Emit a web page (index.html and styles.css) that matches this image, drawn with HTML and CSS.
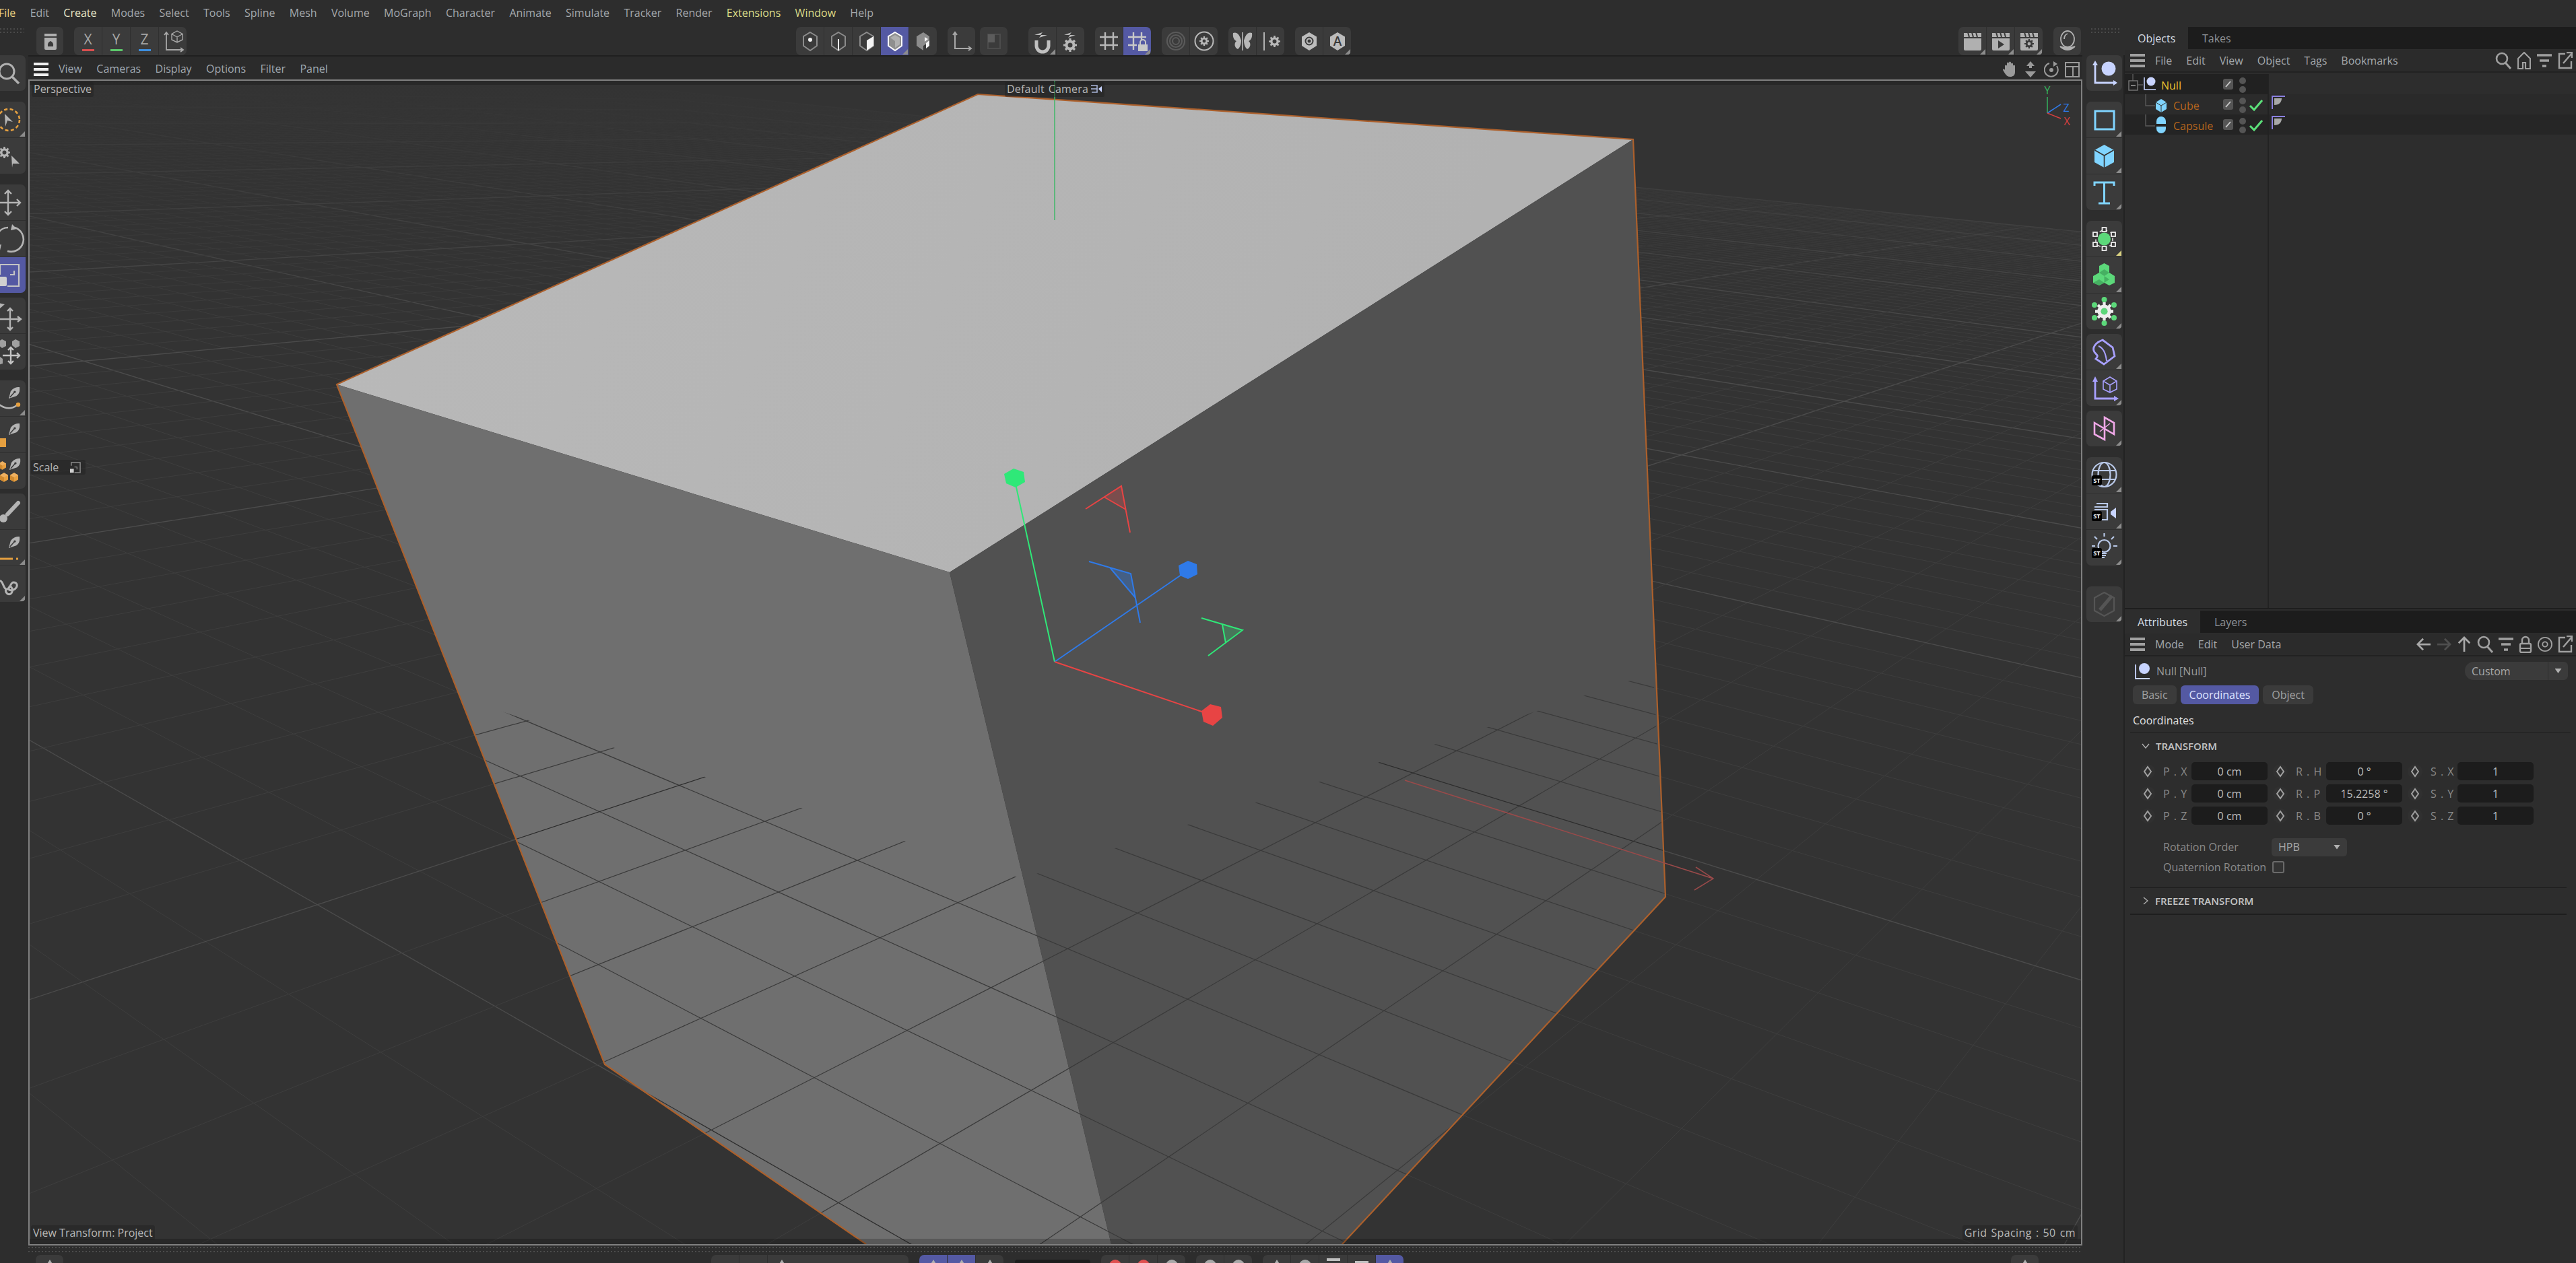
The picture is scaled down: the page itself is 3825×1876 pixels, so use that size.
FILE: index.html
```html
<!DOCTYPE html>
<html lang="en">
<head>
<meta charset="utf-8">
<title>Cinema 4D</title>
<link rel="stylesheet" href="styles.css">
</head>
<body>
<svg class="defs" aria-hidden="true">
  <defs>
    <symbol id="nib" viewBox="0 0 20 18"><path d="M19 0C20 7 18 11 14 14L2 18 5 7C8 2 13 0 19 0Z" fill="#b4b4b4"/><path d="M4 16 11 8" stroke="#3a3a3a" stroke-width="1.6"/><circle cx="11.500" cy="7.500" r="1.800" fill="#3a3a3a"/></symbol>
    <symbol id="gear" viewBox="0 0 20 20"><circle cx="10" cy="10" r="5.500" fill="none" stroke="currentColor" stroke-width="4"/><path d="M10 0v5M10 15v5M0 10h5M15 10h5M3 3l3.500 3.500M13.500 13.500 17 17M17 3l-3.500 3.500M6.500 13.500 3 17" stroke="currentColor" stroke-width="3.200"/></symbol>
    <symbol id="clap" viewBox="0 0 28 28"><path d="M1 7V1h26v6ZM1 9h26v16a2 2 0 0 1-2 2H3a2 2 0 0 1-2-2Z" fill="#b0b0b0"/><path d="M7 0l2 7M13 0l2 7M19 0l2 7" stroke="#3a3a3a" stroke-width="2"/></symbol>
    <symbol id="burger" viewBox="0 0 22 22"><path d="M0 3h22M0 11h22M0 19h22" stroke="currentColor" stroke-width="4"/></symbol>
    <symbol id="ocube" viewBox="0 0 16 18"><path d="M8 0 16 4.500V13.500L8 18 0 13.500V4.500Z" fill="#e8a040"/><path d="M8 9V18L0 13.500V4.500Z" fill="#d08a30"/><path d="M8 0 16 4.500 8 9 0 4.500Z" fill="#eeb060"/></symbol>
    <symbol id="diamond" viewBox="0 0 22 22"><circle cx="11" cy="11" r="11" fill="#303030"/><path d="M11 4 16 11 11 18 6 11Z" fill="none" stroke="#a0a0a0" stroke-width="2"/></symbol>
    <symbol id="expand" viewBox="0 0 22 26"><path d="M11 3H2V24H20V14" fill="none" stroke="#a0a0a0" stroke-width="2.400"/><path d="M8 17 21 2M13 1H21V9" fill="none" stroke="#a0a0a0" stroke-width="2.400"/></symbol>
    <symbol id="search" viewBox="0 0 24 26"><circle cx="10" cy="10" r="8" fill="none" stroke="#a0a0a0" stroke-width="2.600"/><path d="M15 16 23 25" stroke="#a0a0a0" stroke-width="3"/></symbol>
    <symbol id="filter" viewBox="0 0 22 22"><path d="M0 3h22M4 11h14M8 19h6" stroke="#a0a0a0" stroke-width="3.600"/></symbol>
    <symbol id="st" viewBox="0 0 16 16"><rect width="16" height="16" rx="3" fill="#000"/><text x="8" y="12" text-anchor="middle" class="st">ST</text></symbol>
  </defs>
</svg>

<div class="app">
  <nav class="menubar">
    <span class="m file">File</span><span class="m">Edit</span><span class="m create">Create</span><span class="m">Modes</span><span class="m">Select</span><span class="m">Tools</span><span class="m">Spline</span><span class="m">Mesh</span><span class="m">Volume</span><span class="m">MoGraph</span><span class="m">Character</span><span class="m">Animate</span><span class="m">Simulate</span><span class="m">Tracker</span><span class="m">Render</span><span class="m ext">Extensions</span><span class="m ext">Window</span><span class="m">Help</span>
  </nav>

  <div class="main">
    <div class="workspace">
      <div class="toolbar">
        <div class="dots-h tl"></div>
        <div class="grp g-model">
          <div class="btn narrow"><svg viewBox="0 0 42 42"><path d="M12 10h18v4H12ZM12 16h18v16a2 2 0 0 1-2 2H14a2 2 0 0 1-2-2Z" fill="#b0b0b0"/><path d="M17 29q-1-6 4-8 5 2 4 8Z" fill="#3a3a3a"/></svg></div>
        </div>
        <div class="grp g16">
          <div class="btn axis"><span>X</span><i class="ux"></i></div>
          <div class="btn axis"><span>Y</span><i class="uy"></i></div>
          <div class="btn axis"><span>Z</span><i class="uz"></i></div>
          <div class="btn"><svg viewBox="0 0 42 42" fill="none" stroke="#a8a8a8" stroke-width="1.800"><path d="M11 8V34H36M8 12l3-4 3 4M32 31l4 3-4 3"/><path d="M27 6 35 10.500V19L27 23 19 19V10.500ZM19 10.500 27 15 35 10.500M27 15V23" stroke-width="1.400"/></svg></div>
        </div>
        <div class="grp g-modes">
          <div class="btn"><svg viewBox="0 0 42 42"><path d="M21 8 31 14V28L21 35 11 28V14Z" fill="none" stroke="#8c8c8c" stroke-width="2"/><circle cx="21" cy="19" r="3" fill="#f0f0f0"/></svg></div>
          <div class="btn"><svg viewBox="0 0 42 42"><path d="M21 8 31 14V28L21 35 11 28V14Z" fill="none" stroke="#8c8c8c" stroke-width="2"/><path d="M21 18V35" stroke="#f0f0f0" stroke-width="2"/></svg></div>
          <div class="btn"><svg viewBox="0 0 42 42"><path d="M21 8 31 14V28L21 35 11 28V14Z" fill="none" stroke="#8c8c8c" stroke-width="2"/><path d="M31 14V28L21 35V20Z" fill="#f4f4f4"/></svg></div>
          <div class="btn on tri"><svg viewBox="0 0 42 42"><path d="M21 8 31 14V28L21 35 11 28V14Z" fill="#8f8f8f" stroke="#fff" stroke-width="2"/><path d="M21 12 28 16V26L21 31V21L14 16Z" fill="#b0b0b0"/></svg></div>
          <div class="btn"><svg viewBox="0 0 42 42"><path d="M21 8 30 14V22L21 28 21 35 11 28V14Z" fill="#8c8c8c"/><path d="M30 20V28L25 32V24ZM23 15l5 3-5 4Z" fill="#f4f4f4"/></svg></div>
        </div>
        <div class="grp g16"><div class="btn"><svg viewBox="0 0 42 42" fill="none" stroke="#a8a8a8" stroke-width="2"><path d="M11 8V32H35M8 12l3-4 3 4M31 29l4 3-4 3"/></svg></div></div>
        <div class="grp g7"><div class="btn"><svg viewBox="0 0 42 42"><path d="M12 11h18v21H12Z" fill="none" stroke="#4c4c4c" stroke-width="2"/><path d="M12 11h10v12H12Z" fill="#5c5c5c"/></svg></div></div>
        <div class="grp g31">
          <div class="btn tri"><svg viewBox="0 0 42 42"><path d="M12 20V28a9 9 0 0 0 18 0V20" fill="none" stroke="#c0c0c0" stroke-width="5"/><path d="M9 12l12-4-3 4 10 0-12 4 3-4Z" fill="#c0c0c0"/></svg></div>
          <div class="btn"><svg viewBox="0 0 42 42" color="#b8b8b8"><use href="#gear" x="10" y="17" width="20" height="20"/><path d="M11 12l11-4-3 4 9 0-11 4 3-4Z" fill="#b8b8b8"/></svg></div>
        </div>
        <div class="grp g16">
          <div class="btn"><svg viewBox="0 0 42 42" fill="none" stroke="#b8b8b8" stroke-width="2.400"><path d="M15 8V34M27 8V34M7 15H34M7 27H34"/></svg></div>
          <div class="btn on tri"><svg viewBox="0 0 42 42"><path d="M15 8V34M27 8V20M7 15H34M7 27H20" fill="none" stroke="#c8c8c8" stroke-width="2.400"/><path d="M22 26h14v10H22Z" fill="#c8c8c8"/><path d="M25 26v-3a4 4 0 0 1 8 0v3" fill="none" stroke="#c8c8c8" stroke-width="2"/></svg></div>
        </div>
        <div class="grp g16">
          <div class="btn"><svg viewBox="0 0 42 42" fill="none" stroke="#5a5a5a" stroke-width="2.200"><circle cx="21" cy="21" r="13"/><circle cx="21" cy="21" r="9"/><circle cx="21" cy="21" r="5"/></svg></div>
          <div class="btn"><svg viewBox="0 0 42 42" color="#b8b8b8"><circle cx="21" cy="21" r="13.500" fill="none" stroke="#b8b8b8" stroke-width="2"/><use href="#gear" x="14" y="14" width="14" height="14"/></svg></div>
        </div>
        <div class="grp g16">
          <div class="btn"><svg viewBox="0 0 42 42"><path d="M21 8V35" stroke="#c0c0c0" stroke-width="1.500"/><path d="M19 20C16 10 12 7 7 9 6 16 9 20 12 21 8 24 9 31 14 33 17 31 19 26 19 20ZM23 20C26 10 30 7 35 9 36 16 33 20 30 21 34 24 33 31 28 33 25 31 23 26 23 20Z" fill="#b8b8b8"/></svg></div>
          <div class="btn"><svg viewBox="0 0 42 42" color="#b8b8b8"><path d="M11 8V35" stroke="#c0c0c0" stroke-width="1.800"/><use href="#gear" x="18" y="13" width="17" height="17"/></svg></div>
        </div>
        <div class="grp g16">
          <div class="btn"><svg viewBox="0 0 42 42"><path d="M21 8 32 14.500V28L21 35 10 28V14.500Z" fill="#bcbcbc"/><circle cx="21" cy="21" r="5.500" fill="none" stroke="#3a3a3a" stroke-width="2"/><circle cx="21" cy="21" r="2.500" fill="#3a3a3a"/></svg></div>
          <div class="btn tri"><svg viewBox="0 0 42 42"><path d="M21 8 32 14.500V28L21 35 10 28V14.500Z" fill="#bcbcbc"/><text x="21" y="28" text-anchor="middle" class="hexa">A</text></svg></div>
        </div>
        <div class="spacer"></div>
        <div class="grp">
          <div class="btn tri"><svg viewBox="0 0 42 42"><use href="#clap" x="7" y="8" width="28" height="28"/></svg></div>
          <div class="btn tri"><svg viewBox="0 0 42 42"><use href="#clap" x="7" y="8" width="28" height="28"/><path d="M17 20l9 6-9 6Z" fill="#3a3a3a"/></svg></div>
          <div class="btn tri"><svg viewBox="0 0 42 42" color="#3a3a3a"><use href="#clap" x="7" y="8" width="28" height="28"/><use href="#gear" x="14" y="18" width="14" height="14"/></svg></div>
        </div>
        <div class="grp g16 g-last">
          <div class="btn"><svg viewBox="0 0 42 42" fill="none" stroke="#b0b0b0" stroke-width="1.800"><ellipse cx="21" cy="18" rx="10" ry="12"/><path d="M16 18q0-6 5-8"/><path d="M10 29q11 10 22 0-11 4-22 0Z" fill="#b0b0b0"/></svg></div>
        </div>
        <div class="dots-h tr"></div>
      </div>

      <div class="wbody">
        <aside class="ltools">
          <div class="sgrp"><div class="sbtn"><svg viewBox="0 0 53 53"><circle cx="25" cy="24" r="11" fill="none" stroke="#b0b0b0" stroke-width="3"/><path d="M33 32 43 42" stroke="#b0b0b0" stroke-width="3.500"/></svg></div></div>
          <div class="sgrp mt16">
            <div class="sbtn tri"><svg viewBox="0 0 53 53"><circle cx="28" cy="27" r="16" fill="none" stroke="#e5a040" stroke-width="2.600" stroke-dasharray="5 3.500"/><path d="M22 18 34 30 26 28 23 37Z" fill="#b4b4b4"/></svg></div>
            <div class="sbtn"><svg viewBox="0 0 53 53" color="#b4b4b4"><use href="#gear" x="13" y="13" width="17" height="17"/><path d="M32 26 44 38 34 38 33 44Z" fill="#b4b4b4"/></svg></div>
          </div>
          <div class="sgrp mt16">
            <div class="sbtn"><svg viewBox="0 0 53 53" fill="none" stroke="#b4b4b4" stroke-width="2.400"><path d="M27 9V45M9 27H45M22 14l5-5 5 5M22 40l5 5 5-5M14 22l-5 5 5 5M40 22l5 5-5 5"/></svg></div>
            <div class="sbtn"><svg viewBox="0 0 53 53" fill="none" stroke="#b4b4b4" stroke-width="2.600"><path d="M13 39A18 18 0 0 1 27 10M37 10A18 18 0 0 1 26 45"/><path d="M33 5 40 12 31 14Z M15 44 9 37 17 35Z" fill="#b4b4b4" stroke="none"/></svg></div>
            <div class="sbtn on"><svg viewBox="0 0 53 53"><path d="M15 11H43V43H26" fill="none" stroke="#c4c4c4" stroke-width="2.200"/><path d="M15 11V26M30 26H36V20" fill="none" stroke="#c4c4c4" stroke-width="2.200"/><rect x="13" y="29" width="12" height="14" rx="2" fill="#d0d0d0"/></svg></div>
          </div>
          <div class="sgrp mt7">
            <div class="sbtn"><svg viewBox="0 0 53 53" fill="none" stroke="#b4b4b4" stroke-width="2.400"><path d="M30 16V48M15 32H46M26 20l4-4 4 4M26 44l4 4 4-4M41 28l5 4-5 4"/><path d="M12 8 22 10 15 16Z" fill="#b4b4b4" stroke="none"/></svg></div>
            <div class="sbtn"><svg viewBox="0 0 53 53" fill="none" stroke="#c4c4c4" stroke-width="2.400"><path d="M31 20V44M19 32H44M27 24l4-4 4 4M27 40l4 4 4-4M40 28l4 4-4 4"/><path d="M38 8 44 11V18L38 21 33 17V11Z" fill="#a0a0a0" stroke="none"/><path d="M18 8 24 11V18L18 21 13 17V11Z" fill="#a0a0a0" stroke="none"/><path d="M15 34 19 37V44L13 46Z" fill="#a0a0a0" stroke="none"/></svg></div>
          </div>
          <div class="sgrp mt16">
            <div class="sbtn tri"><svg viewBox="0 0 53 53"><use href="#nib" x="26" y="10" width="19" height="17"/><path d="M14 36Q28 46 40 37" fill="none" stroke="#b4b4b4" stroke-width="2.400"/><circle cx="42" cy="36" r="3.200" fill="#e5a040"/></svg></div>
            <div class="sbtn"><svg viewBox="0 0 53 53"><use href="#nib" x="26" y="10" width="19" height="17"/><rect x="13" y="32" width="11" height="13" fill="#e5a040"/></svg></div>
            <div class="sbtn"><svg viewBox="0 0 53 53"><use href="#nib" x="27" y="8" width="19" height="17"/><use href="#ocube" x="13" y="12" width="11" height="13"/><use href="#ocube" x="15" y="29" width="12" height="14"/><use href="#ocube" x="30" y="29" width="12" height="14"/><use href="#ocube" x="4" y="29" width="8" height="12"/></svg></div>
          </div>
          <div class="sgrp mt7">
            <div class="sbtn"><svg viewBox="0 0 53 53"><path d="M42 14 26 31" stroke="#b4b4b4" stroke-width="6" stroke-linecap="round"/><circle cx="20" cy="37" r="6" fill="#b4b4b4"/></svg></div>
            <div class="sbtn tri"><svg viewBox="0 0 53 53"><use href="#nib" x="26" y="10" width="19" height="17"/><path d="M14 43H34M39 43H42" stroke="#e5a040" stroke-width="3"/></svg></div>
            <div class="sbtn tri"><svg viewBox="0 0 53 53"><path d="M13 22C20 20 19 32 24 34 30 36 30 24 35 24 41 24 42 30 37 34 33 37 26 36 28 32 30 27 36 34 32 40 27 45 22 38 24 34" fill="none" stroke="#b4b4b4" stroke-width="3"/></svg></div>
          </div>
        </aside>

        <section class="center">
          <div class="viewbar">
            <svg class="burger white"><use href="#burger"/></svg>
            <div class="vmenu"><span>View</span><span>Cameras</span><span>Display</span><span>Options</span><span>Filter</span><span>Panel</span></div>
            <div class="vicons">
              <svg viewBox="0 0 20 24" class="vi"><path d="M3 13V7a1.500 1.500 0 0 1 3 0V3a1.500 1.500 0 0 1 3 0V2a1.500 1.500 0 0 1 3 0V4a1.500 1.500 0 0 1 3 0V7a1.500 1.500 0 0 1 3 0V16C18 21 15 23 11 23 7 23 5 21 3 18L0 13C0 11 2 11 3 13Z" fill="#9a9a9a"/></svg>
              <svg viewBox="0 0 20 24" class="vi"><path d="M10 0 16 7H12V10H8V7H4ZM10 24 2 15H18Z" fill="#9a9a9a"/></svg>
              <svg viewBox="0 0 22 24" class="vi"><path d="M8 3A10 10 0 1 0 19 7" fill="none" stroke="#9a9a9a" stroke-width="2"/><circle cx="11" cy="13" r="3" fill="#9a9a9a"/><path d="M14 0 20 4 14 8Z" fill="#9a9a9a"/></svg>
              <svg viewBox="0 0 22 24" class="vi"><path d="M1 2H21V23H1ZM1 8H21M12 8V23" fill="none" stroke="#9a9a9a" stroke-width="2"/></svg>
            </div>
          </div>

          <div class="viewport">
            <svg class="scene" viewBox="44 120 3046 1728">
              <defs>
                <linearGradient id="fade" gradientUnits="userSpaceOnUse" x1="0" y1="120" x2="0" y2="520">
                  <stop offset="0" stop-color="#333"/><stop offset=".2" stop-color="#333" stop-opacity=".75"/><stop offset="1" stop-color="#333" stop-opacity="0"/>
                </linearGradient>
                <linearGradient id="topf" gradientUnits="userSpaceOnUse" x1="500" y1="200" x2="2000" y2="800">
                  <stop offset="0" stop-color="#b9b9b9"/><stop offset="1" stop-color="#b2b2b2"/>
                </linearGradient>
                <clipPath id="cubeclip"><path d="M683 1037 1517 1305 2455 1000 2473 1332 1993 1848H1286L898 1581Z"/></clipPath>
              </defs>
              <rect x="44" y="120" width="3046" height="1728" fill="#333"/>
              <g id="floor" fill="none"></g>
              <rect x="44" y="120" width="3046" height="400" fill="url(#fade)"/>
              <path d="M1452 140 2425 207 1410 850 500 571Z" fill="url(#topf)"/>
              <path d="M500 571 1410 850 1650 1848H1286L898 1581Z" fill="#6f6f6f"/>
              <path d="M1410 850 2425 207 2473 1332 1993 1848H1650Z" fill="#515151"/>
              <g id="floorcube" fill="none" clip-path="url(#cubeclip)"></g>
              <path d="M1286 1848 898 1581 500 571 1452 140 2425 207 2473 1332 1993 1848" fill="none" stroke="#ac602c" stroke-width="2.200"/>
              <path d="M2086 1159 2544 1305M2518 1288 2544 1305 2516 1322" fill="none" stroke="#9a4a4a" stroke-width="1.500"/>
              <path d="M1566 120V327" stroke="#3fb868" stroke-width="1.500"/>
              <g fill="none" stroke-width="2">
                <path d="M1566 983 1506 710" stroke="#2fe878"/>
                <path d="M1566 983 1764 847" stroke="#2f7ae8"/>
                <path d="M1566 983 1799 1062" stroke="#e84444"/>
                <path d="M1639 738 1665 722 1672 757Z" fill="#e84444" fill-opacity=".28" stroke="none"/>
                <path d="M1612 756 1665 722 1678 791M1639 738 1672 757" stroke="#e84444"/>
                <path d="M1648 843 1679 852 1686 888Z" fill="#2f7ae8" fill-opacity=".35" stroke="none"/>
                <path d="M1617 834 1679 852 1693 925M1648 843 1686 888" stroke="#2f7ae8"/>
                <path d="M1815 928 1845 936 1820 955Z" fill="#2fe878" fill-opacity=".25" stroke="none"/>
                <path d="M1784 918 1845 936 1794 974M1815 928 1820 955" stroke="#2fe878"/>
              </g>
              <path d="M1505 696 1520 701 1522 716 1508 724 1494 718 1491 704Z" fill="#2fe878"/>
              <path d="M1764 833 1777 838 1778 853 1764 860 1752 855 1750 840Z" fill="#2f7ae8"/>
              <path d="M1797 1046 1813 1050 1815 1066 1801 1078 1787 1072 1784 1056Z" fill="#e84444"/>
              <path d="M3040 168V144" stroke="#35b55f" stroke-width="1.500"/>
              <path d="M3040 168 3060 155" stroke="#2f7ae8" stroke-width="1.500"/>
              <path d="M3040 168 3060 176" stroke="#d84040" stroke-width="1.500"/>
              <text x="3040" y="140" class="axl gy">Y</text>
              <text x="3068" y="166" class="axl gz">Z</text>
              <text x="3069" y="186" class="axl gx">X</text>
              <rect x="44" y="120" width="3046" height="6" fill="#000" fill-opacity=".2"/>
              <rect x="44" y="1840" width="3046" height="8" fill="#000" fill-opacity=".2"/>
            </svg>
            <div class="lab persp">Perspective</div>
            <div class="lab cam">Default Camera<svg viewBox="0 0 18 18" class="camic"><path d="M1 4H10V14H2" fill="none" stroke="#a8b4d8" stroke-width="1.600"/><path d="M1 9H10" stroke="#a8b4d8" stroke-width="1.600"/><path d="M12 9 17 5V14Z" fill="#c8d4ff"/></svg></div>
            <div class="lab scalel">Scale<svg viewBox="0 0 18 18" class="scic"><path d="M3 6V1H17V17H8" fill="none" stroke="#8a8a8a" stroke-width="1.600"/><path d="M8 8H12V12" fill="none" stroke="#8a8a8a" stroke-width="1.400"/><rect x="1" y="11" width="6" height="6" fill="#d0d0d0"/></svg></div>
            <div class="lab vt">View Transform: Project</div>
            <div class="lab gs">Grid Spacing : 50 cm</div>
          </div>

          <div class="handle"></div>

          <div class="bottombar">
            <div class="grp bg-first"><div class="btn small"><i class="tip"></i></div></div>
            <div class="grp bg-a">
              <div class="btn small"></div><div class="btn small"></div><div class="btn wide"><i class="tip"></i></div>
            </div>
            <div class="grp g16">
              <div class="btn on small"><i class="tip"></i></div><div class="btn on small"><i class="tip"></i></div><div class="btn small"><i class="tip"></i></div>
            </div>
            <div class="framefield"></div>
            <div class="grp g16">
              <div class="btn small"><i class="rec"></i></div><div class="btn small"><i class="rec"></i></div><div class="btn small"><i class="rec gray"></i></div>
            </div>
            <div class="grp g16">
              <div class="btn small"><i class="rec gray"></i></div><div class="btn small"><i class="rec gray"></i></div>
            </div>
            <div class="grp g16">
              <div class="btn small"><i class="tip"></i></div><div class="btn small"><i class="rec gray"></i></div><div class="btn small"><i class="bar"></i></div><div class="btn small"><i class="bar low"></i></div><div class="btn on small"><i class="tip"></i></div>
            </div>
            <div class="spacer"></div>
            <div class="grp g-last"><div class="btn small"><i class="tip"></i></div></div>
          </div>
        </section>

        <aside class="rtools">
          <div class="sgrp"><div class="sbtn"><svg viewBox="0 0 53 53"><path d="M13 11V41H44" fill="none" stroke="#c8d4ff" stroke-width="2.800"/><path d="M9 15 13 8 17 15ZM40 37 46 41 40 45Z" fill="#c8d4ff"/><circle cx="33" cy="20" r="10.500" fill="#c8d4ff"/></svg></div></div>
          <div class="sgrp mt16">
            <div class="sbtn tri"><svg viewBox="0 0 53 53"><rect x="13" y="14" width="28" height="27" fill="none" stroke="#80d4ff" stroke-width="3"/></svg></div>
            <div class="sbtn tri"><svg viewBox="0 0 53 53"><path d="M26.500 10 41 18V36L26.500 44 12 36V18Z" fill="#80d4ff"/><path d="M12.500 18 26.500 26 40.500 18M26.500 26V44" fill="none" stroke="#333" stroke-width="1.600"/></svg></div>
            <div class="sbtn tri"><svg viewBox="0 0 53 53"><path d="M12 17V12H41V17M12 12H41M26.500 12V43M18 43H35" fill="none" stroke="#80d4ff" stroke-width="3"/></svg></div>
          </div>
          <div class="sgrp mt16">
            <div class="sbtn tri yel"><svg viewBox="0 0 53 53"><circle cx="26.500" cy="27" r="9.500" fill="#5cd87a"/><path d="M26.500 13 39 19V35L26.500 41 14 35V19Z" fill="none" stroke="#ddd" stroke-width="1.600" stroke-dasharray="5 5"/><g fill="#3a3a3a" stroke="#eee" stroke-width="1.800"><rect x="23.500" y="10" width="6" height="6"/><rect x="23.500" y="38" width="6" height="6"/><rect x="10" y="17" width="6" height="6"/><rect x="37" y="17" width="6" height="6"/><rect x="10" y="32" width="6" height="6"/><rect x="37" y="32" width="6" height="6"/></g></svg></div>
            <div class="sbtn tri"><svg viewBox="0 0 53 53"><path d="M26.500 9 34 13V23L42 28V38L34 42 26.500 38 19 42 10 38V28L19 23V13Z" fill="#5cd87a"/><path d="M26.500 18 34 23 26.500 28 19 23ZM10 38 19 33 26.500 38 19 42ZM26.500 28V38L34 33" fill="#46b062"/></svg></div>
            <div class="sbtn tri"><svg viewBox="0 0 53 53" color="#eee"><use href="#gear" x="13" y="13" width="27" height="27"/><circle cx="26.500" cy="26.500" r="5" fill="#5cd87a"/><g fill="#5cd87a"><circle cx="26.500" cy="9" r="4"/><circle cx="26.500" cy="44" r="4"/><circle cx="12" cy="17" r="4"/><circle cx="41" cy="17" r="4"/><circle cx="12" cy="36" r="4"/><circle cx="41" cy="36" r="4"/></g></svg></div>
          </div>
          <div class="sgrp mt7">
            <div class="sbtn tri"><svg viewBox="0 0 53 53" fill="none" stroke="#a8a0ff" stroke-width="2.800"><path d="M24 9 39 20 42 33 26 45 14 37C19 32 15 31 12 27 8 21 13 13 24 9Z"/><path d="M18 18Q28 22 30 40" stroke-width="2"/></svg></div>
            <div class="sbtn tri"><svg viewBox="0 0 53 53" fill="none" stroke="#a8a0ff" stroke-width="2.800"><path d="M13 14V42H44"/><path d="M9 17 13 9 17 17ZM41 38 48 42 41 46Z" fill="#a8a0ff" stroke="none"/><path d="M35 10 45 16V28L35 33 25 28V16ZM25 16 35 22 45 16M35 22V33" stroke-width="1.600"/></svg></div>
          </div>
          <div class="sgrp mt7">
            <div class="sbtn tri"><svg viewBox="0 0 53 53" fill="none" stroke="#f0a8e8" stroke-width="2.600"><path d="M12 18 41 35V18L27 10V43L12 35Z"/><path d="M20 31 35 19" stroke-width="1.600"/></svg></div>
          </div>
          <div class="sgrp mt16">
            <div class="sbtn tri"><svg viewBox="0 0 53 53"><g fill="none" stroke="#b8c8e8" stroke-width="2.200"><circle cx="26.500" cy="26" r="18"/><ellipse cx="26.500" cy="26" rx="9" ry="18"/><path d="M9 20H44M9 33H44"/></g><use href="#st" x="8" y="27" width="15" height="15"/></svg></div>
            <div class="sbtn tri"><svg viewBox="0 0 53 53"><path d="M12 20H31V15H15M12 24H31V39H13" fill="none" stroke="#b8c8e8" stroke-width="2.200"/><path d="M36 27 44 21V37L36 31Z" fill="#c8d4ff"/><use href="#st" x="8" y="26" width="15" height="15"/></svg></div>
            <div class="sbtn tri"><svg viewBox="0 0 53 53"><g fill="none" stroke="#b8c8e8" stroke-width="2.200"><circle cx="26.500" cy="24" r="9"/><path d="M26.500 5V10M12 10 16 14M41 10 37 14M8 24H13M40 24H46M23 35H30M23 38H29M23 41H27"/></g><use href="#st" x="8" y="27" width="15" height="15"/></svg></div>
          </div>
          <div class="sgrp mt31">
            <div class="sbtn tri"><svg viewBox="0 0 53 53"><path d="M26.500 9 41 17V36L26.500 44 12 36V17Z" fill="none" stroke="#555" stroke-width="2.200"/><path d="M20 35 38 14" stroke="#555" stroke-width="5"/></svg></div>
          </div>
        </aside>
      </div>
    </div>

    <div class="panels">
      <section class="p-obj">
        <div class="tabs"><span class="tab act obj">Objects</span><span class="tab">Takes</span></div>
        <div class="pmenu">
          <svg class="burger"><use href="#burger"/></svg>
          <div class="pm obj-m"><span>File</span><span>Edit</span><span>View</span><span>Object</span><span>Tags</span><span>Bookmarks</span></div>
          <div class="picons oi">
            <svg class="ps"><use href="#search"/></svg>
            <svg class="ph" viewBox="0 0 20 26"><path d="M1 25V10L10 1 19 10V25H12V16H8V25Z" fill="none" stroke="#a0a0a0" stroke-width="2.200"/></svg>
            <svg class="pf"><use href="#filter"/></svg>
            <svg class="pe"><use href="#expand"/></svg>
          </div>
        </div>
        <div class="tree">
          <div class="tree-l">
            <div class="row r-a">
              <svg class="tsvg t1" viewBox="0 0 54 30"><path d="M12 0V10M19 16H27" stroke="#5a5a5a" stroke-width="1.400"/><rect x="6" y="10" width="13" height="14" fill="none" stroke="#777" stroke-width="1.400"/><path d="M9 17H16" stroke="#999" stroke-width="1.600"/><path d="M29 5V23H46" fill="none" stroke="#c8d4ff" stroke-width="1.600"/><circle cx="39" cy="11" r="6.500" fill="#c8d4ff"/></svg>
              <span class="oname null">Null</span>
              <svg class="flags" viewBox="0 0 66 30"><rect y="7" width="15" height="16" rx="3" fill="#555"/><path d="M4 19 11 11" stroke="#ccc" stroke-width="1.800"/><circle cx="29" cy="10" r="5" fill="#555"/><circle cx="29" cy="23" r="5" fill="#555"/></svg>
            </div>
            <div class="row r-b">
              <svg class="tsvg t2" viewBox="0 0 72 30"><path d="M31 0V17H45" fill="none" stroke="#5a5a5a" stroke-width="1.400"/><path d="M54 7 62 12V22L54 27 46 22V12Z" fill="#80d4ff"/><path d="M46 12 54 17 62 12M54 17V27" fill="none" stroke="#333" stroke-width="1"/></svg>
              <span class="oname geo">Cube</span>
              <svg class="flags" viewBox="0 0 66 30"><rect y="7" width="15" height="16" rx="3" fill="#555"/><path d="M4 19 11 11" stroke="#ccc" stroke-width="1.800"/><circle cx="29" cy="10" r="5" fill="#555"/><circle cx="29" cy="23" r="5" fill="#555"/><path d="M40 17 46 23 58 9" fill="none" stroke="#5ce07a" stroke-width="3"/></svg>
            </div>
            <div class="row r-c">
              <svg class="tsvg t2" viewBox="0 0 72 30"><path d="M31 0V17H45" fill="none" stroke="#5a5a5a" stroke-width="1.400"/><path d="M47 14V10A7 7 0 0 1 61 10V14ZM47 18H61V21A7 7 0 0 1 47 21Z" fill="#80d4ff"/></svg>
              <span class="oname geo">Capsule</span>
              <svg class="flags" viewBox="0 0 66 30"><rect y="7" width="15" height="16" rx="3" fill="#555"/><path d="M4 19 11 11" stroke="#ccc" stroke-width="1.800"/><circle cx="29" cy="10" r="5" fill="#555"/><circle cx="29" cy="23" r="5" fill="#555"/><path d="M40 17 46 23 58 9" fill="none" stroke="#5ce07a" stroke-width="3"/></svg>
            </div>
          </div>
          <div class="tree-r">
            <div class="row rr-a"></div>
            <div class="row rr-b"><svg class="tag" viewBox="0 0 20 20"><path d="M1 20V1H20" fill="none" stroke="#8a80e0" stroke-width="2"/><path d="M4 4H15C15 10 11 14 4 14Z" fill="#a8a8a8"/></svg></div>
            <div class="row rr-c"><svg class="tag" viewBox="0 0 20 20"><path d="M1 20V1H20" fill="none" stroke="#8a80e0" stroke-width="2"/><path d="M4 4H15C15 10 11 14 4 14Z" fill="#a8a8a8"/></svg></div>
          </div>
        </div>
      </section>

      <section class="p-attr">
        <div class="tabs"><span class="tab act att">Attributes</span><span class="tab">Layers</span></div>
        <div class="pmenu">
          <svg class="burger"><use href="#burger"/></svg>
          <div class="pm attr-m"><span>Mode</span><span>Edit</span><span>User Data</span></div>
          <div class="picons ai">
            <svg viewBox="0 0 24 24" class="n24"><path d="M23 12H3M11 3 2 12 11 21" fill="none" stroke="#a8a8a8" stroke-width="3"/></svg>
            <svg viewBox="0 0 24 24" class="n24"><path d="M1 12H21M13 3 22 12 13 21" fill="none" stroke="#4e4e4e" stroke-width="3"/></svg>
            <svg viewBox="0 0 24 26" class="n24"><path d="M12 25V3M3 11 12 2 21 11" fill="none" stroke="#a8a8a8" stroke-width="3"/></svg>
            <svg class="ps"><use href="#search"/></svg>
            <svg class="pf"><use href="#filter"/></svg>
            <svg viewBox="0 0 20 26" class="pl"><path d="M5 12V7a5 5 0 0 1 10 0V12" fill="none" stroke="#a0a0a0" stroke-width="2.400"/><rect x="2" y="12" width="16" height="13" rx="2" fill="none" stroke="#a0a0a0" stroke-width="2.400"/><path d="M2 19H18" stroke="#a0a0a0" stroke-width="2"/></svg>
            <svg viewBox="0 0 24 24" class="n24"><circle cx="12" cy="12" r="11" fill="none" stroke="#a0a0a0" stroke-width="2"/><circle cx="12" cy="12" r="4" fill="none" stroke="#a0a0a0" stroke-width="2"/></svg>
            <svg class="pe"><use href="#expand"/></svg>
          </div>
        </div>
        <div class="ahead">
          <svg class="nullic" viewBox="0 0 26 26"><path d="M3 3V24H24" fill="none" stroke="#c8d4ff" stroke-width="1.800"/><circle cx="16" cy="9" r="8" fill="#c8d4ff"/></svg>
          <span class="nulltxt">Null [Null]</span>
          <div class="dd custom"><span class="dd-t">Custom</span><span class="dd-a"><i class="caret"></i></span></div>
        </div>
        <div class="atabs"><span class="atab">Basic</span><span class="atab sel">Coordinates</span><span class="atab">Object</span></div>
        <div class="h-coord">Coordinates</div>
        <div class="sec-head open"><svg viewBox="0 0 12 8" class="chev"><path d="M1 1 6 7 11 1" fill="none" stroke="#b0b0b0" stroke-width="1.400"/></svg><b>TRANSFORM</b></div>
        <div class="coords">
          <div class="cell"><svg class="dm"><use href="#diamond"/></svg><span class="lb">P . X</span><span class="fld">0 cm</span></div>
          <div class="cell"><svg class="dm"><use href="#diamond"/></svg><span class="lb">R . H</span><span class="fld">0 °</span></div>
          <div class="cell"><svg class="dm"><use href="#diamond"/></svg><span class="lb">S . X</span><span class="fld">1</span></div>
          <div class="cell"><svg class="dm"><use href="#diamond"/></svg><span class="lb">P . Y</span><span class="fld">0 cm</span></div>
          <div class="cell"><svg class="dm"><use href="#diamond"/></svg><span class="lb">R . P</span><span class="fld">15.2258 °</span></div>
          <div class="cell"><svg class="dm"><use href="#diamond"/></svg><span class="lb">S . Y</span><span class="fld">1</span></div>
          <div class="cell"><svg class="dm"><use href="#diamond"/></svg><span class="lb">P . Z</span><span class="fld">0 cm</span></div>
          <div class="cell"><svg class="dm"><use href="#diamond"/></svg><span class="lb">R . B</span><span class="fld">0 °</span></div>
          <div class="cell"><svg class="dm"><use href="#diamond"/></svg><span class="lb">S . Z</span><span class="fld">1</span></div>
        </div>
        <div class="opt first"><span class="optl">Rotation Order</span><div class="dd hpb"><span class="dd-t">HPB</span><i class="caret"></i></div></div>
        <div class="opt"><span class="optl">Quaternion Rotation</span><i class="chk"></i></div>
        <div class="sec-head closed"><svg viewBox="0 0 8 12" class="chev2"><path d="M1 1 7 6 1 11" fill="none" stroke="#b0b0b0" stroke-width="1.400"/></svg><b>FREEZE TRANSFORM</b></div>
      </section>
    </div>
  </div>
</div>
<script src="grid.js"></script>
</body>
</html>
```
FILE: styles.css
```css
* { box-sizing: border-box; }
html, body { margin: 0; padding: 0; }
body {
  width: 3825px; height: 1876px; overflow: hidden;
  background: #2d2d2d; color: #a8a8a8;
  font-family: "Open Sans", "Noto Sans", sans-serif; font-size: 16px;
}
.defs { position: absolute; width: 0; height: 0; }
svg { display: block; }
.app { display: flex; flex-direction: column; height: 1876px; }

/* menu */
.menubar { height: 40px; padding-bottom: 3px; display: flex; align-items: center; gap: 21.3px; margin-left: -2px; flex: none; }
.m { color: #a4a8ac; white-space: nowrap; }
.m.file { color: #ecd080; }
.m.create { color: #e6e6c8; }
.m.ext { color: #dcdc88; }

.main { flex: 1; display: flex; min-height: 0; }
.workspace { width: 3155px; display: flex; flex-direction: column; flex: none; }

/* top toolbar */
.toolbar { height: 42px; display: flex; flex: none; position: relative; }
.grp { display: flex; gap: 1px; border-radius: 7px; overflow: hidden; background: #2f2f2f; flex: none; height: 42px; }
.g-model { margin-left: 54px; }
.g16 { margin-left: 16px; }
.g7 { margin-left: 7px; }
.g31 { margin-left: 31px; }
.g-modes { margin-left: 905px; }
.g-last { margin-right: 65px; }
.spacer { flex: 1; }
.btn { width: 41px; height: 42px; background: #3b3b3b; position: relative; flex: none; }
.btn.narrow { width: 40px; }
.btn svg { width: 42px; height: 42px; margin-left: -.5px; }
.btn.on { background: #5459a3; }
.tri::after {
  content: ""; position: absolute; right: 1px; bottom: 1px; width: 8px; height: 8px;
  background: #8c8c8c; clip-path: polygon(100% 0, 100% 100%, 0 100%);
}
.axis { display: flex; flex-direction: column; align-items: center; }
.axis span { font-size: 21px; line-height: 30px; margin-top: 3px; color: #a8a8a8; }
.axis i { width: 18px; height: 3px; display: block; }
.ux { background: #d94f4f; } .uy { background: #5cc96b; } .uz { background: #3d8fe0; }
.dots-h {
  position: absolute; height: 7px; top: 2px;
  background-image: linear-gradient(90deg, #4a4a4a 2px, transparent 2px), linear-gradient(90deg, #4a4a4a 2px, transparent 2px);
  background-size: 5px 2px; background-repeat: repeat-x; background-position: 0 0, 0 5px;
}
.dots-h.tl { left: 0; width: 36px; }
.dots-h.tr { left: 3105px; width: 44px; }

.wbody { flex: 1; display: flex; min-height: 0; }

/* side tools */
.ltools { width: 42px; flex: none; overflow: hidden; }
.ltools .sgrp { margin-left: -15px; }
.sgrp { width: 53px; display: flex; flex-direction: column; gap: 1px; border-radius: 7px; overflow: hidden; background: #2f2f2f; }
.mt16 { margin-top: 16px; } .mt7 { margin-top: 7px; } .mt31 { margin-top: 31px; }
.sbtn { width: 53px; height: 53px; background: #3b3b3b; position: relative; }
.sbtn svg { width: 53px; height: 53px; }
.sbtn.on { background: #5459a3; }
.sbtn.yel::after { background: #d8d080; }
.rtools { width: 63px; flex: none; padding-left: 6px; border-right: 2px solid #222; }

/* center */
.center { width: 3050px; flex: none; display: flex; flex-direction: column; min-height: 0; }
.viewbar { height: 36px; padding-top: 3px; flex: none; display: flex; align-items: center; background: #2b2b2b; border-top: 2px solid #1f1f1f; }
.burger { width: 22px; height: 22px; color: #a0a0a0; margin-left: 8px; flex: none; }
.burger.white { color: #f0f0f0; }
.vmenu { display: flex; gap: 21.4px; margin: -2px 0 0 15px; color: #a0a8b0; }
.vicons { margin-left: auto; display: flex; gap: 9px; margin-right: 4px; }
.vi { width: 22px; height: 24px; }
.viewport { height: 1732px; flex: none; border: 2px solid #808080; position: relative; background: #333; }
.scene { width: 3046px; height: 1728px; }
.axl { font: 16px "Open Sans", sans-serif; text-anchor: middle; }
.gy { fill: #35b55f; } .gz { fill: #2f7ae8; } .gx { fill: #d84040; }
.st { font: bold 10px "Open Sans", sans-serif; fill: #fff; }
.hexa { font: 600 19px "Open Sans", sans-serif; fill: #3a3a3a; }

.lab {
  position: absolute; height: 22px; display: flex; align-items: center; padding: 0 3px;
  background: rgba(32, 32, 32, .45); color: #b8b8b8; border-radius: 3px; white-space: nowrap;
}
.persp { left: 3px; top: 2px; padding-bottom: 2px; }
.cam { left: 1448px; top: 2px; word-spacing: 1.5px; letter-spacing: .2px; padding-bottom: 2px; }
.camic { width: 18px; height: 18px; margin-left: 3px; }
.scalel { left: 2px; top: 563px; width: 81px; }
.scic { width: 17px; height: 17px; margin-left: 16px; }
.vt { left: 2px; top: 1700px; }
.gs { right: 5px; top: 1700px; letter-spacing: .4px; word-spacing: 1.5px; }

.handle {
  height: 14px; flex: none;
  background-image: linear-gradient(90deg, #4c4c4c 2px, transparent 2px), linear-gradient(90deg, #4c4c4c 2px, transparent 2px);
  background-size: 5px 2px; background-repeat: repeat-x; background-position: 0 2px, 0 8px;
}
.bottombar { height: 12px; display: flex; overflow: hidden; flex: none; }
.bottombar .grp { border-radius: 7px 7px 0 0; }
.bg-first { margin-left: 11px; }
.bg-a { margin-left: 962px; }
.btn.small { width: 41px; }
.btn.wide { width: 209px; }
.framefield { width: 112px; height: 20px; margin: 7px 0 0 17px; background: #1c1c1c; border-radius: 4px; }
.tip { position: absolute; left: 16px; top: 7px; width: 10px; height: 8px; background: #b0b0b0; clip-path: polygon(50% 0, 100% 100%, 0 100%); }
.rec { position: absolute; left: 12px; top: 7px; width: 18px; height: 18px; border-radius: 50%; background: #e05050; }
.rec.gray { background: #a8a8a8; }
.bar { position: absolute; left: 11px; top: 5px; width: 20px; height: 4px; background: #c0c0c0; }
.bar.low { top: 9px; }

/* panels */
.panels { flex: 1; min-width: 0; display: flex; flex-direction: column; }
.p-obj { height: 865px; display: flex; flex-direction: column; flex: none; border-bottom: 2px solid #1e1e1e; }
.p-attr { margin-top: 2px; flex: 1; }
.tabs { height: 33px; background: #1c1c1c; display: flex; align-items: center; flex: none; }
.tab { height: 33px; display: flex; align-items: center; padding: 0 21px; color: #8e9296; }
.tab.act { background: #2d2d2d; color: #d8dee4; }
.tab.obj { width: 94px; padding: 0 0 0 19px; }
.tab.att { width: 112px; padding: 0 0 0 19px; }
.pmenu { height: 34px; display: flex; align-items: center; flex: none; border-bottom: 2px solid #222; background: #2b2b2b; margin-top: 1px; }
.pm { display: flex; gap: 21px; margin-left: 15px; color: #a4a8ac; }
.picons { margin-left: auto; display: flex; align-items: center; }
.oi { gap: 9px; margin-right: 5px; }
.ai { gap: 8px; margin-right: 5px; }
.ps { width: 24px; height: 26px; } .ph { width: 20px; height: 26px; } .pf { width: 22px; height: 22px; } .pe { width: 22px; height: 26px; } .pl { width: 20px; height: 26px; }
.n24 { width: 22px; height: 24px; }

.tree { flex: 1; display: flex; padding-top: 2px; min-height: 0; }
.tree-l { width: 212px; flex: none; }
.tree-r { flex: 1; border-left: 2px solid #222; }
.row { height: 30px; display: flex; align-items: center; }
.r-a { background: #212121; }
.r-b { background: #2b2b2b; }
.r-c { background: #242424; }
.rr-b { background: #2a2a2a; }
.rr-c { background: #262626; }
.tsvg { height: 30px; flex: none; }
.t1 { width: 54px; } .t2 { width: 72px; }
.oname { flex: 1; margin-top: 3px; }
.null { color: #f0c030; }
.geo { color: #b5651d; }
.flags { width: 66px; height: 30px; flex: none; }
.tag { width: 20px; height: 20px; margin: -6px 0 0 4px; }

/* attributes */
.ahead { height: 43px; display: flex; align-items: center; padding: 0 12px 0 13px; }
.nullic { width: 26px; height: 26px; }
.nulltxt { margin-left: 8px; color: #9a9a9a; }
.dd { background: #3b3b3b; display: flex; align-items: center; }
.custom { margin-left: auto; width: 153px; height: 27px; border-radius: 13px 6px 6px 13px; }
.dd-t { padding-left: 10px; color: #a8a8a8; flex: 1; }
.dd-a { width: 30px; height: 27px; border-left: 1px solid #2d2d2d; display: flex; align-items: center; justify-content: center; }
.caret { width: 10px; height: 7px; background: #b0b0b0; display: block; clip-path: polygon(0 0, 100% 0, 50% 100%); }
.atabs { display: flex; gap: 6px; padding-left: 12px; height: 28px; }
.atab { height: 28px; display: flex; align-items: center; padding: 0 13px; background: #3b3b3b; border-radius: 6px; color: #a0a0a0; }
.atab.sel { background: #5459a3; color: #dfe3ff; }
.h-coord { margin: 8px 8px 0; padding: 0 4px; height: 35px; line-height: 32px; color: #e0e0e0; border-bottom: 1px solid #1e1e1e; }
.sec-head { display: flex; align-items: center; font-size: 15px; color: #c4c4c4; }
.sec-head b { font-weight: 600; }
.open { height: 37px; padding-left: 25px; gap: 9px; }
.chev { width: 12px; height: 8px; }
.chev2 { width: 8px; height: 12px; }
.closed { height: 41px; gap: 10px; margin: 15px 14px 0 8px; border-top: 1px solid #1e1e1e; border-bottom: 2px solid #1e1e1e; padding-left: 19px; }
.coords { display: grid; grid-template-columns: 189px 192px 187px; column-gap: 8px; row-gap: 6px; padding: 6px 0 0 23px; }
.cell { height: 27px; display: flex; align-items: center; }
.dm { width: 22px; height: 22px; flex: none; }
.lb { margin-left: 12px; color: #8a8a8a; word-spacing: 2px; }
.fld { margin-left: auto; width: 113px; height: 27px; background: #1c1c1c; border-radius: 5px; display: flex; align-items: center; justify-content: center; color: #bcbcbc; }
.opt { display: flex; align-items: center; height: 30px; padding-left: 57px; }
.opt.first { margin-top: 18px; height: 30px; }
.optl { width: 161px; color: #8a8a8a; white-space: nowrap; flex: none; }
.hpb { width: 112px; height: 27px; border-radius: 5px; padding-right: 10px; }
.chk { width: 18px; height: 18px; border: 2px solid #6a6a6a; border-radius: 3px; background: #333; margin-left: 1px; display: block; }
```
FILE: grid.js
```js
(function () {
  var NS = "http://www.w3.org/2000/svg";
  var O = [1565, 983], VA = [4000, 180], VB = [-2200, -184], a = 0.031;
  var floor = document.getElementById("floor");
  var front = document.getElementById("floorcube");

  function pt(u, v) {
    var d = 1 + u * a + v * a;
    return [
      (O[0] + u * a * VA[0] + v * a * VB[0]) / d,
      (O[1] + u * a * VA[1] + v * a * VB[1]) / d
    ];
  }
  function add(g, p, q, stroke, width) {
    var l = document.createElementNS(NS, "line");
    l.setAttribute("x1", p[0].toFixed(1));
    l.setAttribute("y1", p[1].toFixed(1));
    l.setAttribute("x2", q[0].toFixed(1));
    l.setAttribute("y2", q[1].toFixed(1));
    l.setAttribute("stroke", stroke);
    l.setAttribute("stroke-width", width);
    g.appendChild(l);
  }
  var MIN = 0.02, MAX = 100;
  for (var k = -30; k <= MAX; k++) {
    var major = k % 10 === 0;
    var near = (MIN - 1) / a - k;
    var nearPointU = pt(near, k), farPointU = pt(MAX, k);
    var nearPointV = pt(k, near), farPointV = pt(k, MAX);
    add(floor, nearPointU, farPointU, major ? "#4c4c4c" : "#3e3e3e", major ? 1.4 : 1);
    add(floor, nearPointV, farPointV, major ? "#4c4c4c" : "#3e3e3e", major ? 1.4 : 1);
    add(front, nearPointU, farPointU, major ? "#2c2c2c" : "#3a3a3a", 1.2);
    add(front, nearPointV, farPointV, major ? "#2c2c2c" : "#3a3a3a", 1.2);
  }
})();
```
